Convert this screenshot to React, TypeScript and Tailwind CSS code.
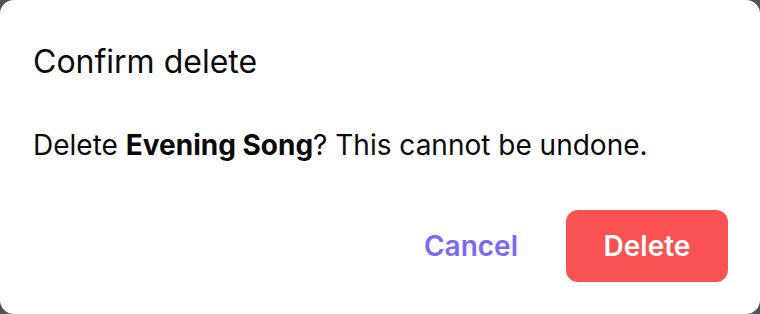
import React from "react";

export default function App() {
  return (
    <div className="w-[760px] h-[314px] bg-[#525252]" style={{ fontFamily: "Inter, 'Noto Sans', sans-serif" }}>
      <div className="w-full h-full bg-white rounded-[14px] flex flex-col pl-[33px] pr-[32px] pt-[42px] pb-[32px]">
        <h2 className="text-[32px] leading-[40px] font-normal text-[#0a0a0a]">Confirm delete</h2>
        <p className="mt-[45px] text-[28px] leading-[36px] text-[#0a0a0a] whitespace-nowrap">
          Delete <strong className="font-bold">Evening Song</strong>? This cannot be undone.
        </p>
        <div className="mt-auto flex justify-end items-center gap-[24px]">
          <button className="h-[72px] px-[24px] text-[28px] font-semibold text-[#7b68f5] rounded-[12px]">Cancel</button>
          <button className="h-[72px] w-[162px] text-[28px] font-semibold text-white bg-[#fa5252] rounded-[12px]">Delete</button>
        </div>
      </div>
    </div>
  );
}
